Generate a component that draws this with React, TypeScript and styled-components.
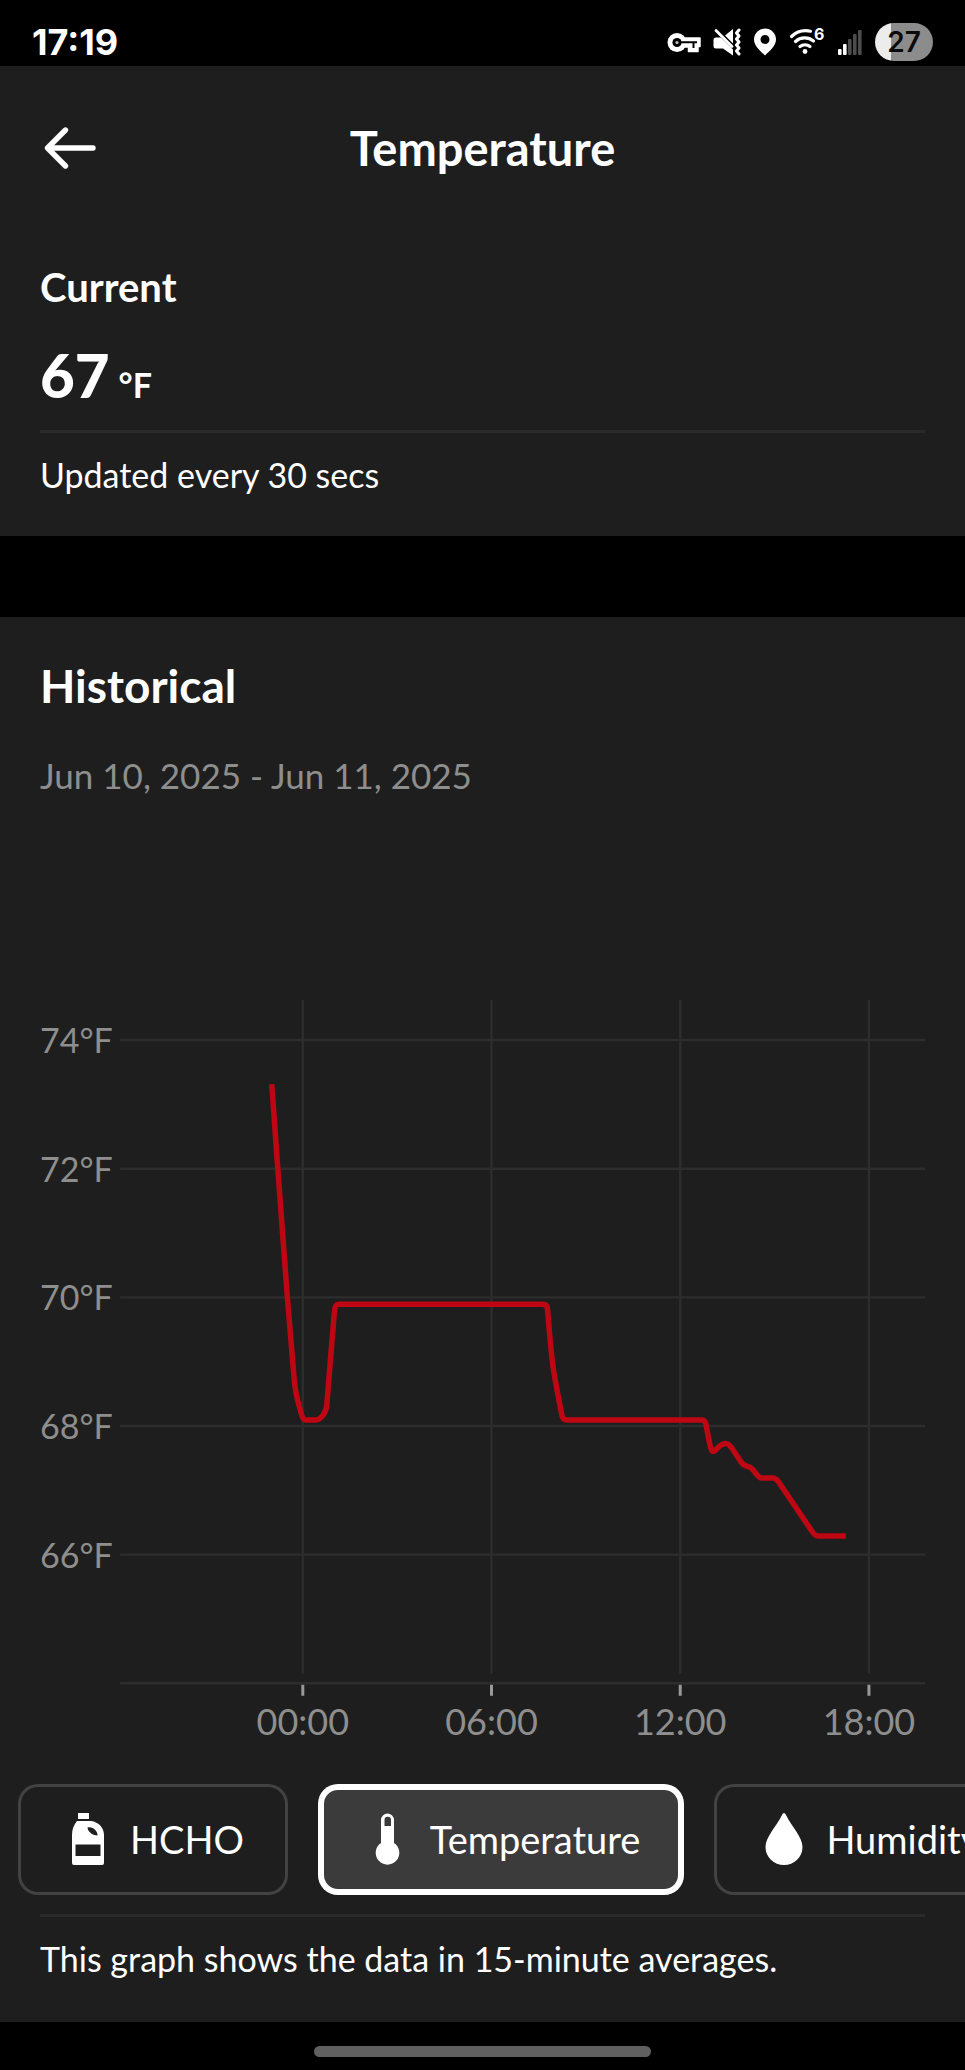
import React, { useState } from "react";
import styled, { createGlobalStyle, css } from "styled-components";

const colors = {
  black: "#000000",
  panel: "#1e1e1e",
  rule: "#2a2a2a",
  grid: "#2d2d2d",
  muted: "#8e8e8e",
  line: "#bf0613",
  white: "#ffffff",
};

const GlobalStyle = createGlobalStyle`
  *, *::before, *::after { box-sizing: border-box; }
  body {
    margin: 0;
    background: ${colors.black};
    color: ${colors.white};
    font-family: Lato, "Liberation Sans", sans-serif;
  }
  h1, h2, p { margin: 0; }
`;

const Screen = styled.div`
  display: flex;
  flex-direction: column;
  min-height: 100vh;
  overflow: hidden;
`;

const StatusBar = styled.div`
  display: flex;
  align-items: center;
  justify-content: space-between;
  height: 66px;
  padding: 18px 32px 0;
  font-family: Inter, sans-serif;
`;

const Clock = styled.time`
  font-size: 36px;
  font-weight: 700;
  line-height: 40px;
`;

const StatusIcons = styled.div`
  display: flex;
  align-items: center;
  gap: 12px;

  svg { display: block; }
`;

const Battery = styled.span`
  width: 58px;
  height: 38px;
  border-radius: 19px;
  background: linear-gradient(to right, #ececec 27%, #8c8c8c 27%);
  color: #0a0a0a;
  font-size: 28px;
  font-weight: 600;
  line-height: 38px;
  text-align: center;
`;

const Panel = styled.section<{ $grow?: boolean }>`
  display: flex;
  flex-direction: column;
  padding: 0 40px;
  background: ${colors.panel};
  ${({ $grow }) => $grow && css`flex: 1;`}
`;

const Header = styled.header`
  display: grid;
  grid-template-columns: 60px 1fr 60px;
  align-items: center;
  height: 163px;
  padding: 0 40px;
  background: ${colors.panel};
`;

const BackButton = styled.button`
  display: flex;
  width: 60px;
  height: 60px;
  padding: 0;
  align-items: center;
  border: 0;
  background: none;
  color: inherit;
  cursor: pointer;
`;

const Title = styled.h1`
  font-size: 47px;
  font-weight: 700;
  line-height: 56px;
  text-align: center;
`;

const Subheading = styled.h2`
  padding-top: 34px;
  font-size: 40px;
  font-weight: 700;
  line-height: 48px;
`;

const Reading = styled.p`
  display: flex;
  align-items: baseline;
  gap: 9px;
  padding: 28px 0 9px;
  font-size: 60px;
  font-weight: 900;
  line-height: 72px;
`;

const Unit = styled.span`
  font-size: 34px;
  font-weight: 700;
`;

const Rule = styled.hr`
  width: 100%;
  height: 3px;
  margin: 0;
  border: 0;
  background: ${colors.rule};
`;

const Note = styled.p`
  padding: 20px 0 39px;
  font-size: 34px;
  line-height: 44px;
`;

const Separator = styled.div`
  height: 81px;
`;

const SectionTitle = styled.h2`
  padding-top: 41px;
  font-size: 46px;
  font-weight: 700;
  line-height: 56px;
`;

const DateRange = styled.p`
  padding-top: 39px;
  color: ${colors.muted};
  font-size: 35px;
  line-height: 44px;
`;

const Chart = styled.svg`
  display: block;
  width: 100%;
  height: auto;
  margin-top: 203px;
  overflow: visible;
`;

const AxisText = styled.text<{ $size: number }>`
  fill: ${colors.muted};
  font-size: ${({ $size }) => $size}px;
`;

const Metrics = styled.div`
  display: flex;
  flex: none;
  gap: 30px;
  margin: 35px -40px 19px;
  padding: 0 18px;
  overflow-x: auto;
  scrollbar-width: none;
`;

const MetricButton = styled.button<{ $active: boolean }>`
  display: flex;
  flex: none;
  align-items: center;
  gap: 16px;
  height: 111px;
  padding: 0 44px;
  border: 0;
  border-radius: 20px;
  background: ${({ $active }) => ($active ? "#3b3b3b" : "transparent")};
  box-shadow: inset 0 0 0 ${({ $active }) => ($active ? `6px ${colors.white}` : "3px #424242")};
  color: ${colors.white};
  font-family: inherit;
  font-size: 38px;
  line-height: 48px;
  cursor: pointer;

  svg { display: block; flex: none; }
`;

const HomeArea = styled.div`
  display: flex;
  align-items: center;
  justify-content: center;
  height: 48px;
  padding-top: 11px;
`;

const HomePill = styled.div`
  width: 35%;
  height: 11px;
  border-radius: 6px;
  background: #606060;
`;

const KeyIcon = () => (
  <svg width="34" height="26" viewBox="0 0 34 26" fill="none" aria-hidden="true">
    <circle cx="10" cy="13.500" r="9.500" fill="#fff" />
    <path
      d="M16 9H33V17.500H31V22.500H21.500V18H16Z"
      fill="#fff"
      stroke="#fff"
      strokeWidth="1.500"
      strokeLinejoin="round"
    />
    <path d="M11 13.300H30M26.500 13V19" stroke="#000" strokeWidth="2" />
    <circle cx="10" cy="13.500" r="4.600" fill="#000" />
    <circle cx="10" cy="13.500" r="1.600" fill="#bbb" />
  </svg>
);

const MuteIcon = () => (
  <svg width="28" height="28" viewBox="0 0 28 28" fill="none" aria-hidden="true">
    <path d="M3 9.500H8L20 21.500V27.500L10 20.500H3Q0.500 20.500 0.500 18V12Q0.500 9.500 3 9.500Z" fill="#fff" />
    <path d="M12 7.500L20 1V15.500Z" fill="#fff" />
    <path d="M3 2.500L19 18.500" stroke="#fff" strokeWidth="2.800" strokeLinecap="round" />
    <path
      d="M26 2L23.500 5L26 8L23.500 11L26 14L23.500 17L26 20L23.500 23L26 26"
      stroke="#fff"
      strokeWidth="3"
      strokeLinejoin="round"
      strokeLinecap="round"
    />
  </svg>
);

const PinIcon = () => (
  <svg width="24" height="28" viewBox="0 0 24 28" aria-hidden="true">
    <path
      fillRule="evenodd"
      fill="#fff"
      d="M12 0.500A11 11 0 0 1 23 11.500C23 18 16.500 23 12 27.500C7.500 23 1 18 1 11.500A11 11 0 0 1 12 0.500ZM12 7A4.500 4.500 0 1 0 12 16A4.500 4.500 0 1 0 12 7Z"
    />
  </svg>
);

const WifiIcon = () => (
  <svg width="36" height="40" viewBox="0 -6 36 40" fill="none" aria-hidden="true">
    <g stroke="#fff" strokeWidth="3.200" strokeLinecap="round">
      <path d="M2.500 8.500A21 21 0 0 1 21.500 3.200" />
      <path d="M6.500 13.500A14 14 0 0 1 24.500 13" />
      <path d="M11 18.500A8 8 0 0 1 21 18.500" />
    </g>
    <circle cx="16" cy="23.500" r="2.400" fill="#fff" />
    <text x="25" y="12" fill="#fff" fontSize="16" fontWeight="700">6</text>
  </svg>
);

const SignalIcon = () => (
  <svg width="26" height="28" viewBox="0 0 26 28" aria-hidden="true">
    {[6, 11, 16, 21, 25].map((height, i) => (
      <rect
        key={height}
        x={1 + i * 5}
        y={27 - height}
        width="3.600"
        height={height}
        rx="1"
        fill={i < 2 ? "#fff" : "#4d4d4d"}
      />
    ))}
  </svg>
);

const ArrowIcon = () => (
  <svg width="60" height="44" viewBox="0 0 60 44" fill="none" aria-hidden="true">
    <path
      d="M53 22H8M25.500 4L7.500 22L25.500 40"
      stroke="#fff"
      strokeWidth="5.400"
      strokeLinecap="round"
      strokeLinejoin="round"
    />
  </svg>
);

const BottleIcon = () => (
  <svg width="52" height="52" viewBox="0 0 52 52" aria-hidden="true">
    <rect x="16" y="0" width="11" height="6" fill="#fff" />
    <path
      fillRule="evenodd"
      fill="#fff"
      d="M15 8H29C37 9 42 15 42 22V50Q42 52 40 52H12Q10 52 10 50V22Q10 14 15 8ZM25.500 14.500C25.500 18 30 22.500 35.500 22.500C36 18 30.500 13 25.500 14.500ZM13.500 31.500V43H38.500V31.500Z"
    />
  </svg>
);

const ThermometerIcon = () => (
  <svg width="52" height="52" viewBox="0 0 52 52" aria-hidden="true">
    <path
      fillRule="evenodd"
      fill="#fff"
      d="M19 7A6.500 6.500 0 0 1 32 7V30A11.800 11.800 0 1 1 19 30ZM22.500 13H29V7A3.200 3.200 0 0 0 22.500 7Z"
    />
  </svg>
);

const DropIcon = () => (
  <svg width="52" height="52" viewBox="0 0 52 52" aria-hidden="true">
    <path
      fill="#fff"
      d="M26 0C27 0 27.500 1 28 2C34 14 44.500 24 44.500 34A18.500 18 0 0 1 7.500 34C7.500 24 18 14 24 2C24.500 1 25 0 26 0Z"
    />
  </svg>
);

const temperatures = [74, 72, 70, 68, 66];
const hours = ["00:00", "06:00", "12:00", "18:00"];
const rowY = (i: number) => 40 + i * 128.5;
const hourX = (i: number) => 262.500 + i * 188.500;

const TemperatureChart = () => (
  <Chart viewBox="0 0 884 748" role="img" aria-label="Temperature history">
    <g stroke={colors.grid} strokeWidth="2.400">
      {[...temperatures, 64].map((t, i) => (
        <line key={t} x1="80" x2="884" y1={rowY(i)} y2={rowY(i)} />
      ))}
      {hours.map((h, i) => (
        <line key={h} x1={hourX(i)} x2={hourX(i)} y1="0" y2="673" />
      ))}
    </g>
    {temperatures.map((t, i) => (
      <AxisText key={t} $size={34} x="0" y={rowY(i) + 13}>{t}°F</AxisText>
    ))}
    {hours.map((h, i) => (
      <g key={h}>
        <line x1={hourX(i)} x2={hourX(i)} y1="684" y2="695" stroke="#999" strokeWidth="3" />
        <AxisText $size={36} x={hourX(i)} y="734" textAnchor="middle">{h}</AxisText>
      </g>
    ))}
    <path
      d="M231.500 84L237.500 168L247 296L254 380C255.500 397 259 405 261.500 415Q263 419.500 265 419.500H275C281 419.500 286 412 286.500 404L294 312Q294.500 304 298 304H502Q506.500 304 507 309C509 335 511 360 514 376Q518 398 521 413Q522 419.500 526 419.500H661Q664 419.500 665 423L669.500 446Q671 453 674.500 450C679 444.500 682 443 685 443C688 443 690 446 692 449L700 461C704 467.500 707 464.500 711 468C715 472 717 477.500 721 477.500H732Q735 477.500 737.500 481L770 529Q774 535.500 777 535.500H805"
      fill="none"
      stroke={colors.line}
      strokeWidth="5.500"
      strokeLinejoin="round"
    />
  </Chart>
);

const metrics = [
  { name: "HCHO", Icon: BottleIcon },
  { name: "Temperature", Icon: ThermometerIcon },
  { name: "Humidity", Icon: DropIcon },
];

export default function App() {
  const [selected, setSelected] = useState("Temperature");

  return (
    <>
      <GlobalStyle />
      <Screen>
        <StatusBar>
          <Clock>17:19</Clock>
          <StatusIcons>
            <KeyIcon />
            <MuteIcon />
            <PinIcon />
            <WifiIcon />
            <SignalIcon />
            <Battery>27</Battery>
          </StatusIcons>
        </StatusBar>
        <Header>
          <BackButton aria-label="Back">
            <ArrowIcon />
          </BackButton>
          <Title>Temperature</Title>
        </Header>
        <Panel>
          <Subheading>Current</Subheading>
          <Reading>
            67<Unit>°F</Unit>
          </Reading>
          <Rule />
          <Note>Updated every 30 secs</Note>
        </Panel>
        <Separator />
        <Panel $grow>
          <SectionTitle>Historical</SectionTitle>
          <DateRange>Jun 10, 2025 - Jun 11, 2025</DateRange>
          <TemperatureChart />
          <Metrics>
            {metrics.map(({ name, Icon }) => (
              <MetricButton
                key={name}
                $active={selected === name}
                aria-pressed={selected === name}
                onClick={() => setSelected(name)}
              >
                <Icon />
                {name}
              </MetricButton>
            ))}
          </Metrics>
          <Rule />
          <Note>This graph shows the data in 15-minute averages.</Note>
        </Panel>
        <HomeArea>
          <HomePill />
        </HomeArea>
      </Screen>
    </>
  );
}
